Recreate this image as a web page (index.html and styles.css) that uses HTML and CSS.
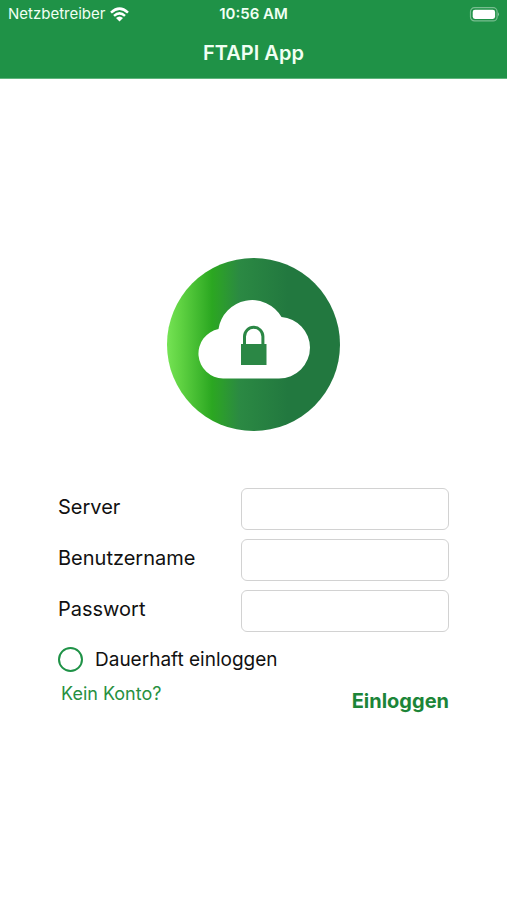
FILE: index.html
```html
<!DOCTYPE html>
<html lang="de">
<head>
<meta charset="utf-8">
<meta name="viewport" content="width=device-width, initial-scale=1">
<title>FTAPI App</title>
<link rel="stylesheet" href="styles.css">
</head>
<body>
<header class="topbar">
  <div class="status">
    <div class="carrier">
      <span>Netzbetreiber</span>
      <svg class="wifi" viewBox="0 0 19 15" width="19" height="15" aria-hidden="true">
        <g fill="none" stroke="currentColor" stroke-width="2.5">
          <path d="M1 5.600Q9.500-2.400 18 5.600"/>
          <path d="M4 8.900Q9.500 3.800 15 8.900"/>
        </g>
        <path fill="currentColor" d="M6 11Q9.500 8 13 11L9.500 14.500Z"/>
      </svg>
    </div>
    <time class="clock">10:56 AM</time>
    <svg class="battery" viewBox="0 0 30 15" width="30" height="15" aria-hidden="true">
      <rect x="1.500" y="0.700" width="26.600" height="13.200" rx="4" fill="none" stroke="#fff" stroke-opacity=".4" stroke-width="1.200"/>
      <rect x="3.700" y="2.700" width="22.400" height="9.200" rx="2.300" fill="#fff"/>
      <path d="M29 5.200Q30.800 7.300 29 9.400Z" fill="#fff" fill-opacity=".5"/>
    </svg>
  </div>
  <h1 class="title">FTAPI App</h1>
</header>
<main class="login">
  <svg class="logo" viewBox="0 0 174 174" width="174" height="174" role="img" aria-label="FTAPI">
    <defs>
      <linearGradient id="disc" x1="0" x2="1" y1="0" y2="0">
        <stop offset="0" stop-color="#75e354"/>
        <stop offset=".08" stop-color="#5fd242"/>
        <stop offset=".26" stop-color="#2ba721"/>
        <stop offset=".31" stop-color="#2c9e2b"/>
        <stop offset=".42" stop-color="#2b8943"/>
        <stop offset=".7" stop-color="#22783f"/>
        <stop offset="1" stop-color="#22783f"/>
      </linearGradient>
    </defs>
    <circle cx="86.500" cy="86.500" r="86.500" fill="url(#disc)"/>
    <path fill="#fff" d="M56 120.500A25 25 0 0 1 51.500 71A34 34 0 0 1 114.500 59A31 31 0 0 1 143 89.500A31 31 0 0 1 112 120.500Z"/>
    <path fill="none" stroke="#2b8745" stroke-width="3" d="M77.500 87V78.500a9.200 9.200 0 0 1 18.400 0V87"/>
    <path fill="#2b8745" d="M74 86h25.500v21h-25.500z"/>
  </svg>
  <form class="form">
    <div class="fields">
      <label class="caption" for="server">Server</label>
      <input class="box" id="server" type="text">
      <label class="caption" for="user">Benutzername</label>
      <input class="box" id="user" type="text">
      <label class="caption" for="password">Passwort</label>
      <input class="box" id="password" type="password">
    </div>
    <label class="remember"><input class="ring" type="checkbox">Dauerhaft einloggen</label>
    <div class="actions">
      <a class="signup" href="#konto">Kein Konto?</a>
      <button class="submit" type="button">Einloggen</button>
    </div>
  </form>
</main>
</body>
</html>
```
FILE: styles.css
```css
* { box-sizing: border-box; }

body {
  margin: 0;
  background: #fff;
  color: #111;
  font-family: Inter, "Liberation Sans", sans-serif;
  font-size: 20px;
  line-height: 24px;
}

.topbar {
  padding: 4px 8px 13px;
  background: #1f9247;
  border-bottom: 1px solid #5fb47d;
  color: #f1fff3;
}

.status {
  display: grid;
  grid-template-columns: 1fr auto 1fr;
  align-items: center;
  font-size: 15px;
  line-height: 20px;
}

.carrier {
  display: flex;
  align-items: center;
  gap: 5px;
}

.wifi { color: #fff; }

.clock { font-weight: 600; }

.battery { justify-self: end; }

.title {
  margin: 17px 0 0;
  font-size: 20px;
  font-weight: 600;
  text-align: center;
}

.login {
  display: flex;
  flex-direction: column;
  align-items: center;
  gap: 56px;
  padding: 179px 58px 0;
}

.form { width: 100%; }

.fields {
  display: grid;
  grid-template-columns: 183px 1fr;
  row-gap: 9px;
  align-items: center;
}

.caption { padding-bottom: 4px; }

.box {
  width: 100%;
  height: 42px;
  padding: 0 10px;
  border: 1px solid #d2d2d2;
  border-radius: 6px;
  background: #fff;
  font: inherit;
}

.remember {
  display: flex;
  align-items: center;
  gap: 12px;
  margin-top: 15px;
  font-size: 19px;
}

.ring {
  appearance: none;
  width: 25px;
  height: 25px;
  margin: 0;
  border: 2px solid #1f9247;
  border-radius: 50%;
}

.ring:checked { background: #1f9247; }

.actions {
  display: flex;
  justify-content: space-between;
  margin-top: 10px;
}

.signup {
  padding-left: 3px;
  color: #27903f;
  font-size: 18px;
  text-decoration: none;
}

.submit {
  margin: 7px 0 0;
  padding: 0;
  border: 0;
  background: none;
  color: #1c8538;
  font: inherit;
  font-weight: 700;
}
```
